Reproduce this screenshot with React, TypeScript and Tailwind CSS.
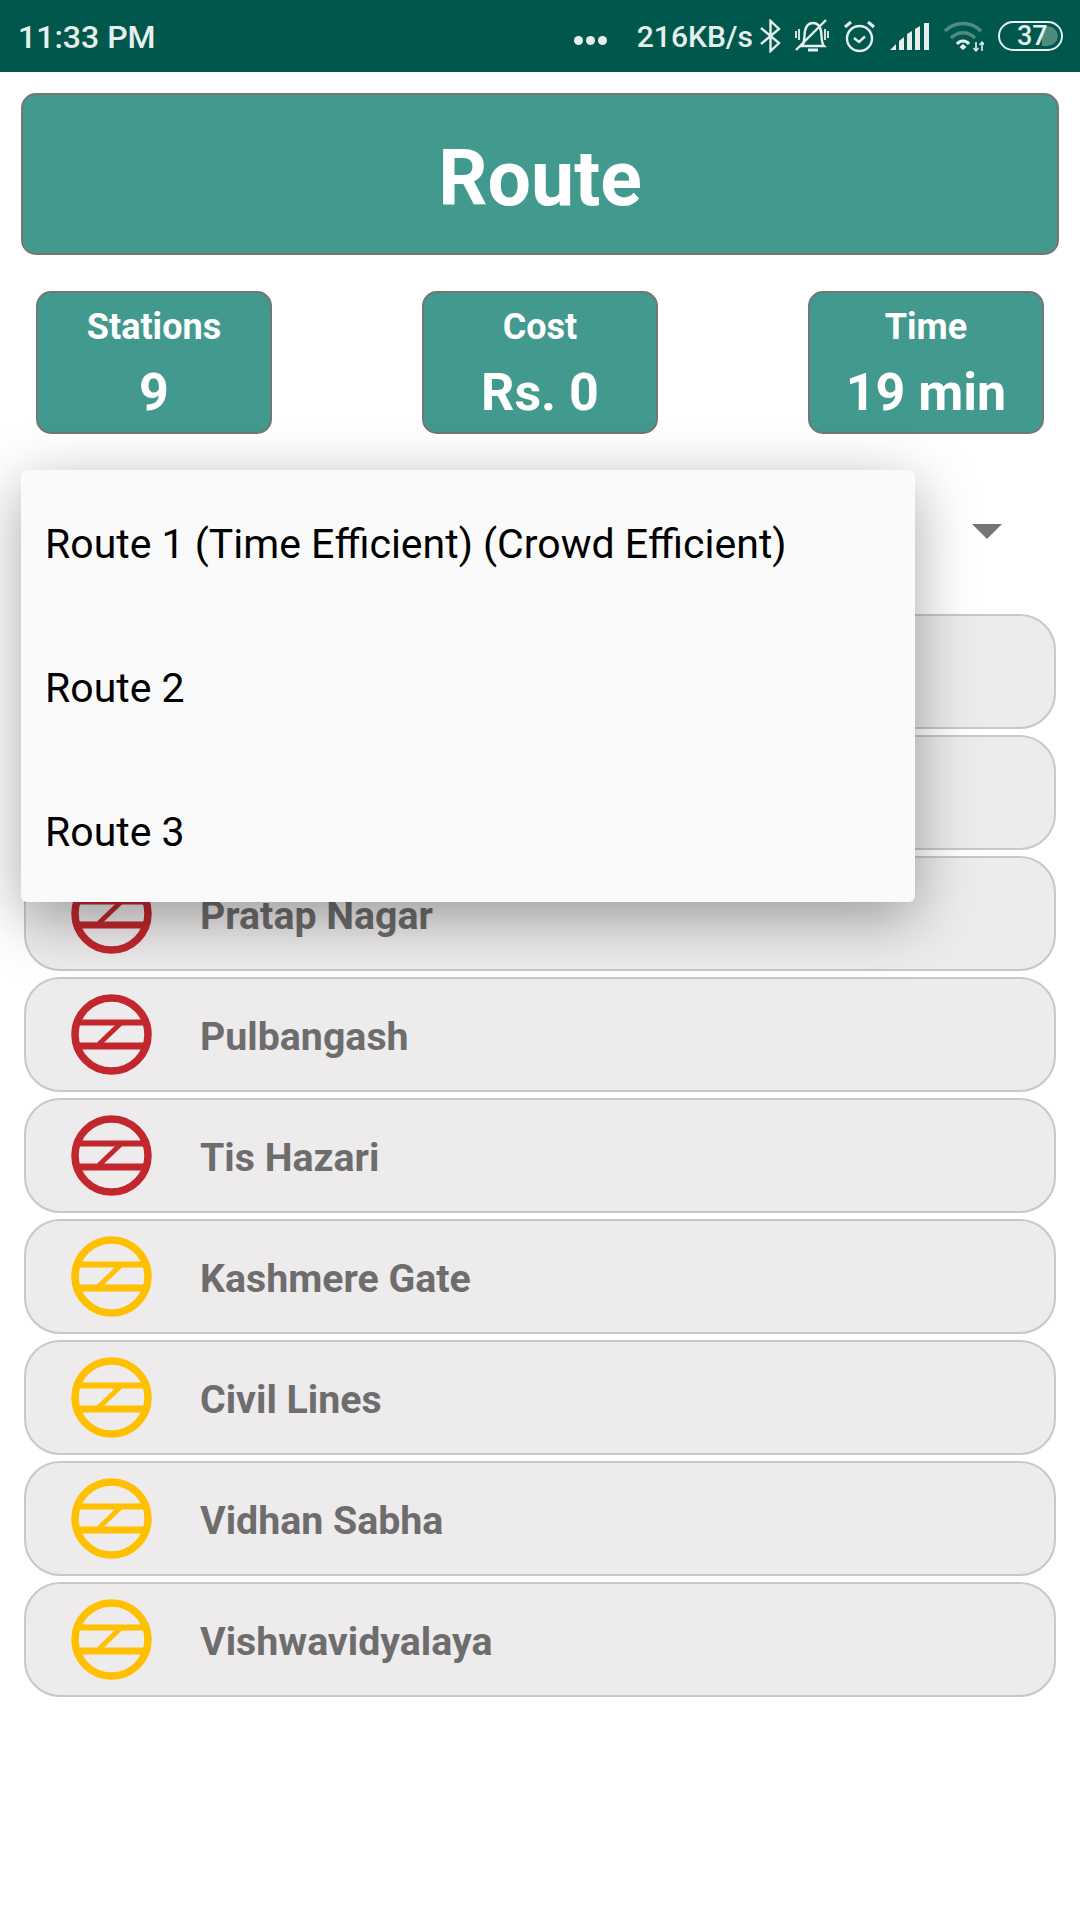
const stats = [
  { label: "Stations", value: "9" },
  { label: "Cost", value: "Rs. 0" },
  { label: "Time", value: "19 min" },
]

const stations = [
  { name: "", color: "#c1272d" },
  { name: "", color: "#c1272d" },
  { name: "Pratap Nagar", color: "#c1272d" },
  { name: "Pulbangash", color: "#c1272d" },
  { name: "Tis Hazari", color: "#c1272d" },
  { name: "Kashmere Gate", color: "#ffc000" },
  { name: "Civil Lines", color: "#ffc000" },
  { name: "Vidhan Sabha", color: "#ffc000" },
  { name: "Vishwavidyalaya", color: "#ffc000" },
]

const routes = ["Route 1 (Time Efficient) (Crowd Efficient)", "Route 2", "Route 3"]

function MetroIcon({ color }: { color: string }) {
  return (
    <svg width="81" height="81" viewBox="0 0 81 81" fill="none" stroke={color}>
      <circle cx="40.5" cy="40.5" r="36.5" strokeWidth="7.5" />
      <path d="M5 28.5H76" strokeWidth="6" />
      <path d="M5 52H76" strokeWidth="7" />
      <path d="M28 50L51 28" strokeWidth="5" />
    </svg>
  )
}

function StatusIcons() {
  return (
    <div className="flex items-center text-[#e6efed]">
      {/* Bluetooth */}
      <svg className="ml-[7px]" width="21" height="34" viewBox="0 0 21 34" fill="none" stroke="currentColor" strokeWidth="2.4">
        <path d="M1 9L19 24L10.5 32V2L19 10L1 25" />
      </svg>
      {/* Muted bell */}
      <svg className="ml-[14px]" width="34" height="34" viewBox="0 0 34 34" fill="none" stroke="currentColor" strokeWidth="2.4">
        <path d="M7 27C10 24 9 17 10 12C11 7 14 4 18 4C22 4 25 7 26 12C27 18 26 24 29 27Z" />
        <path d="M13 31H23" strokeWidth="3" />
        <path d="M1 31L31 1" />
        <path d="M1 12V19M4 10V21M30 10V21M33 12V19" strokeWidth="1.8" />
      </svg>
      {/* Alarm */}
      <svg className="ml-[14px]" width="33" height="34" viewBox="0 0 33 34" fill="none" stroke="currentColor" strokeWidth="2.4">
        <circle cx="16.5" cy="19.5" r="12.5" />
        <path d="M11 19L16 23L22 17.5" />
        <path d="M2 8L8 3M31 8L25 3" strokeWidth="3" />
      </svg>
      {/* Signal */}
      <svg className="ml-[14px]" width="39" height="29" viewBox="0 0 39 29" fill="currentColor">
        <path d="M0 28L6 22V28ZM9 19L14 15V28H9ZM17 12L22 9V28H17ZM25 7L30 4V28H25ZM34 1H39V28H34Z" />
      </svg>
      {/* Wifi */}
      <svg className="ml-[15px]" width="40" height="32" viewBox="0 0 40 32" fill="none">
        <path d="M1 11C11 1 27 1 37 11" stroke="#4f8a7e" strokeWidth="3.6" />
        <path d="M7 18C14 11 24 11 31 18" stroke="#4f8a7e" strokeWidth="3.4" />
        <path d="M13 24C16 20 22 20 25 24" stroke="#e6efed" strokeWidth="3.2" />
        <path d="M15.5 27L19 24L22.5 27L19 30Z" fill="#e6efed" />
        <path d="M32 22V31M38 22V31" stroke="#e6efed" strokeWidth="1.6" />
        <path d="M29.5 28L32 31L34.5 28M35.5 25L38 22L40.5 25" stroke="#e6efed" strokeWidth="1.4" />
      </svg>
      {/* Battery */}
      <div className="relative ml-[14px] flex h-[30px] w-[65px] items-center overflow-hidden rounded-[15px] border-[2.5px] border-[#e6efed]">
        <div className="absolute inset-y-[3px] left-[3px] right-[3px] overflow-hidden rounded-[11px]">
          <div className="ml-auto h-full w-[16px] rounded-r-[11px] bg-[#4f8a7e]" />
        </div>
        <span className="relative ml-[17px] text-[27px] font-medium leading-none text-[#e6efed]">37</span>
      </div>
    </div>
  )
}

export default function App() {
  return (
    <div className="relative h-[1920px] w-[1080px] overflow-hidden bg-white font-['Roboto',sans-serif]">
      {/* Status bar */}
      <div className="flex h-[72px] items-center justify-between bg-[#00574b] pl-[18px] pr-[17px]">
        <span className="pt-[1px] text-[32px] font-medium text-[#e6efed]">11:33 PM</span>
        <div className="flex items-center">
          <div className="mr-[30px] mt-[8px] flex gap-[3px]">
            <span className="size-[9px] rounded-full bg-[#e6efed]" />
            <span className="size-[9px] rounded-full bg-[#e6efed]" />
            <span className="size-[9px] rounded-full bg-[#e6efed]" />
          </div>
          <span className="pt-[1px] text-[30px] font-medium text-[#e6efed]">216KB/s</span>
          <StatusIcons />
        </div>
      </div>

      {/* Title */}
      <div className="mx-[21px] mt-[21px] flex h-[162px] items-center justify-center rounded-[15px] border-2 border-[#757575] bg-[#429a8f]">
        <h1 className="pt-[12px] text-[77px] font-bold text-white">Route</h1>
      </div>

      {/* Stats */}
      <div className="mt-[36px] flex justify-between px-[36px]">
        {stats.map((s) => (
          <div
            key={s.label}
            className="flex h-[143px] w-[236px] flex-col items-center rounded-[15px] border-2 border-[#757575] bg-[#429a8f] pt-[12px] font-bold text-white"
          >
            <span className="text-[36px] leading-[44px]">{s.label}</span>
            <span className="mt-[11px] text-[52px] leading-[66px]">{s.value}</span>
          </div>
        ))}
      </div>

      {/* Route spinner */}
      <div className="flex h-[180px] justify-end pr-[78px] pt-[90px]">
        <div className="h-0 w-0 border-x-[15px] border-t-[15px] border-x-transparent border-t-[#757575]" />
      </div>

      {/* Stations */}
      <div className="flex flex-col gap-[6px] px-[24px]">
        {stations.map((s, i) => (
          <div
            key={i}
            className="flex h-[115px] items-center rounded-[36px] border-2 border-[#c8c8c8] bg-[#edebec] pl-[45px]"
          >
            <MetroIcon color={s.color} />
            <span className="ml-[48px] pt-[5px] text-[39.3px] font-bold text-[#6d6d6d]">{s.name}</span>
          </div>
        ))}
      </div>

      {/* Open dropdown */}
      <div className="absolute left-[21px] top-[470px] flex h-[432px] w-[894px] flex-col justify-center rounded-[6px] bg-[#fafafa] shadow-[0_16px_60px_rgba(0,0,0,0.35)]">
        {routes.map((r) => (
          <div key={r} className="flex h-[144px] items-center pl-[24px] pt-[5px] text-[41px] text-black">
            {r}
          </div>
        ))}
      </div>
    </div>
  )
}
